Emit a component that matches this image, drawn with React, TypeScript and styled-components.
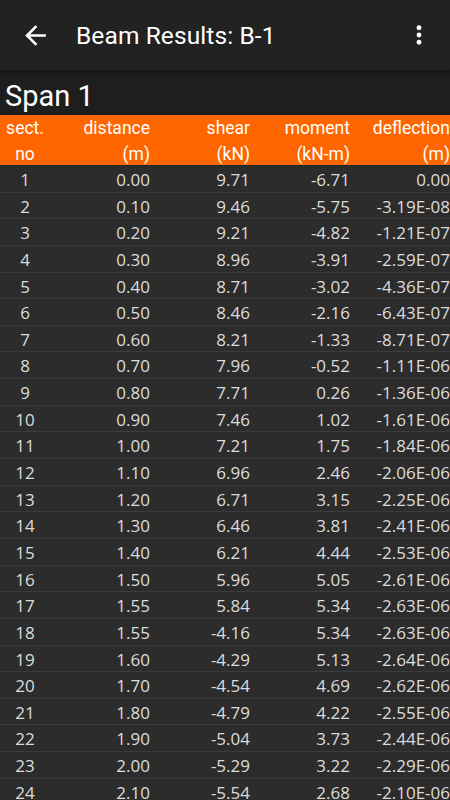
import React from "react";
import styled, { createGlobalStyle } from "styled-components";

const Global = createGlobalStyle`
  html, body { margin: 0; padding: 0; background: #1e1e1e; }
  body { width: 450px; height: 800px; overflow: hidden; font-family: Roboto, "Noto Sans", sans-serif; }
`;

const Page = styled.div`
  width: 450px;
  height: 800px;
  display: flex;
  flex-direction: column;
  background: #1e1e1e;
  overflow: hidden;
`;

const AppBar = styled.header`
  height: 70px;
  flex: none;
  display: flex;
  align-items: center;
  background: #222222;
  color: #ffffff;
  box-shadow: 0 2px 4px rgba(0, 0, 0, 0.5);
  position: relative;
  z-index: 1;
`;

const IconButton = styled.button<{ $w: number }>`
  border: none;
  background: transparent;
  padding: 0;
  width: ${(p) => p.$w}px;
  height: 70px;
  display: flex;
  align-items: center;
  justify-content: center;
  color: #fff;
`;

const Title = styled.h1`
  flex: 1;
  margin: 0;
  font-family: Roboto, sans-serif;
  font-weight: 400;
  font-size: 24.5px;
  color: #ffffff;
  letter-spacing: 0.1px;
`;

const SpanTitle = styled.div`
  height: 45px;
  flex: none;
  box-sizing: border-box;
  padding: 11px 0 0 5px;
  font-family: Roboto, sans-serif;
  font-size: 29px;
  line-height: 31px;
  color: #ffffff;
  background: #1e1e1e;
`;

const Grid = styled.div`
  display: grid;
  grid-template-columns: 50px 100px 100px 100px 100px;
`;

const HeadRow = styled(Grid)`
  background: #ff6600;
  height: 51px;
  flex: none;
  border-bottom: 1px solid #1e2a2a;
  box-sizing: border-box;
`;

const HeadCell = styled.div<{ $center?: boolean }>`
  font-family: Roboto, sans-serif;
  font-size: 17.5px;
  line-height: 25px;
  color: #ffffff;
  text-align: ${(p) => (p.$center ? "center" : "right")};
  white-space: nowrap;
  padding-top: 1px;
`;

const Row = styled(Grid)`
  height: 26.65px;
  box-sizing: border-box;
  background: #2c2c2c;
  border-bottom: 1px solid #3b3b3b;
  align-items: center;
  flex: none;
`;

const Cell = styled.div<{ $center?: boolean }>`
  font-family: "Open Sans", "Noto Sans", sans-serif;
  font-size: 17px;
  line-height: 25px;
  color: #dcdcdc;
  text-align: ${(p) => (p.$center ? "center" : "right")};
  white-space: nowrap;
  padding-top: 1px;
`;

const rows: [string, string, string, string, string][] = [
  ["1", "0.00", "9.71", "-6.71", "0.00"],
  ["2", "0.10", "9.46", "-5.75", "-3.19E-08"],
  ["3", "0.20", "9.21", "-4.82", "-1.21E-07"],
  ["4", "0.30", "8.96", "-3.91", "-2.59E-07"],
  ["5", "0.40", "8.71", "-3.02", "-4.36E-07"],
  ["6", "0.50", "8.46", "-2.16", "-6.43E-07"],
  ["7", "0.60", "8.21", "-1.33", "-8.71E-07"],
  ["8", "0.70", "7.96", "-0.52", "-1.11E-06"],
  ["9", "0.80", "7.71", "0.26", "-1.36E-06"],
  ["10", "0.90", "7.46", "1.02", "-1.61E-06"],
  ["11", "1.00", "7.21", "1.75", "-1.84E-06"],
  ["12", "1.10", "6.96", "2.46", "-2.06E-06"],
  ["13", "1.20", "6.71", "3.15", "-2.25E-06"],
  ["14", "1.30", "6.46", "3.81", "-2.41E-06"],
  ["15", "1.40", "6.21", "4.44", "-2.53E-06"],
  ["16", "1.50", "5.96", "5.05", "-2.61E-06"],
  ["17", "1.55", "5.84", "5.34", "-2.63E-06"],
  ["18", "1.55", "-4.16", "5.34", "-2.63E-06"],
  ["19", "1.60", "-4.29", "5.13", "-2.64E-06"],
  ["20", "1.70", "-4.54", "4.69", "-2.62E-06"],
  ["21", "1.80", "-4.79", "4.22", "-2.55E-06"],
  ["22", "1.90", "-5.04", "3.73", "-2.44E-06"],
  ["23", "2.00", "-5.29", "3.22", "-2.29E-06"],
  ["24", "2.10", "-5.54", "2.68", "-2.10E-06"],
  ["25", "2.20", "-5.79", "2.11", "-1.88E-06"],
];

export default function App() {
  return (
    <>
      <Global />
      <Page>
        <AppBar>
          <IconButton $w={76} aria-label="back">
            <svg width="31" height="31" viewBox="0 0 24 24" style={{ marginLeft: -5 }}>
              <path d="M20 11H7.83l5.59-5.59L12 4l-8 8 8 8 1.41-1.41L7.83 13H20v-2z" fill="#fff" />
            </svg>
          </IconButton>
          <Title>Beam Results: B-1</Title>
          <IconButton $w={58} aria-label="more">
            <svg width="28" height="28" viewBox="0 0 24 24" style={{ marginRight: 4 }}>
              <circle cx="12" cy="5.8" r="2.1" fill="#fff" />
              <circle cx="12" cy="12" r="2.1" fill="#fff" />
              <circle cx="12" cy="18.2" r="2.1" fill="#fff" />
            </svg>
          </IconButton>
        </AppBar>
        <SpanTitle>Span 1</SpanTitle>
        <HeadRow>
          <div>
            <HeadCell $center>sect.</HeadCell>
            <HeadCell $center>no</HeadCell>
          </div>
          <div>
            <HeadCell>distance</HeadCell>
            <HeadCell>(m)</HeadCell>
          </div>
          <div>
            <HeadCell>shear</HeadCell>
            <HeadCell>(kN)</HeadCell>
          </div>
          <div>
            <HeadCell>moment</HeadCell>
            <HeadCell>(kN-m)</HeadCell>
          </div>
          <div>
            <HeadCell>deflection</HeadCell>
            <HeadCell>(m)</HeadCell>
          </div>
        </HeadRow>
        {rows.map((r) => (
          <Row key={r[0]}>
            <Cell $center>{r[0]}</Cell>
            <Cell>{r[1]}</Cell>
            <Cell>{r[2]}</Cell>
            <Cell>{r[3]}</Cell>
            <Cell>{r[4]}</Cell>
          </Row>
        ))}
      </Page>
    </>
  );
}
